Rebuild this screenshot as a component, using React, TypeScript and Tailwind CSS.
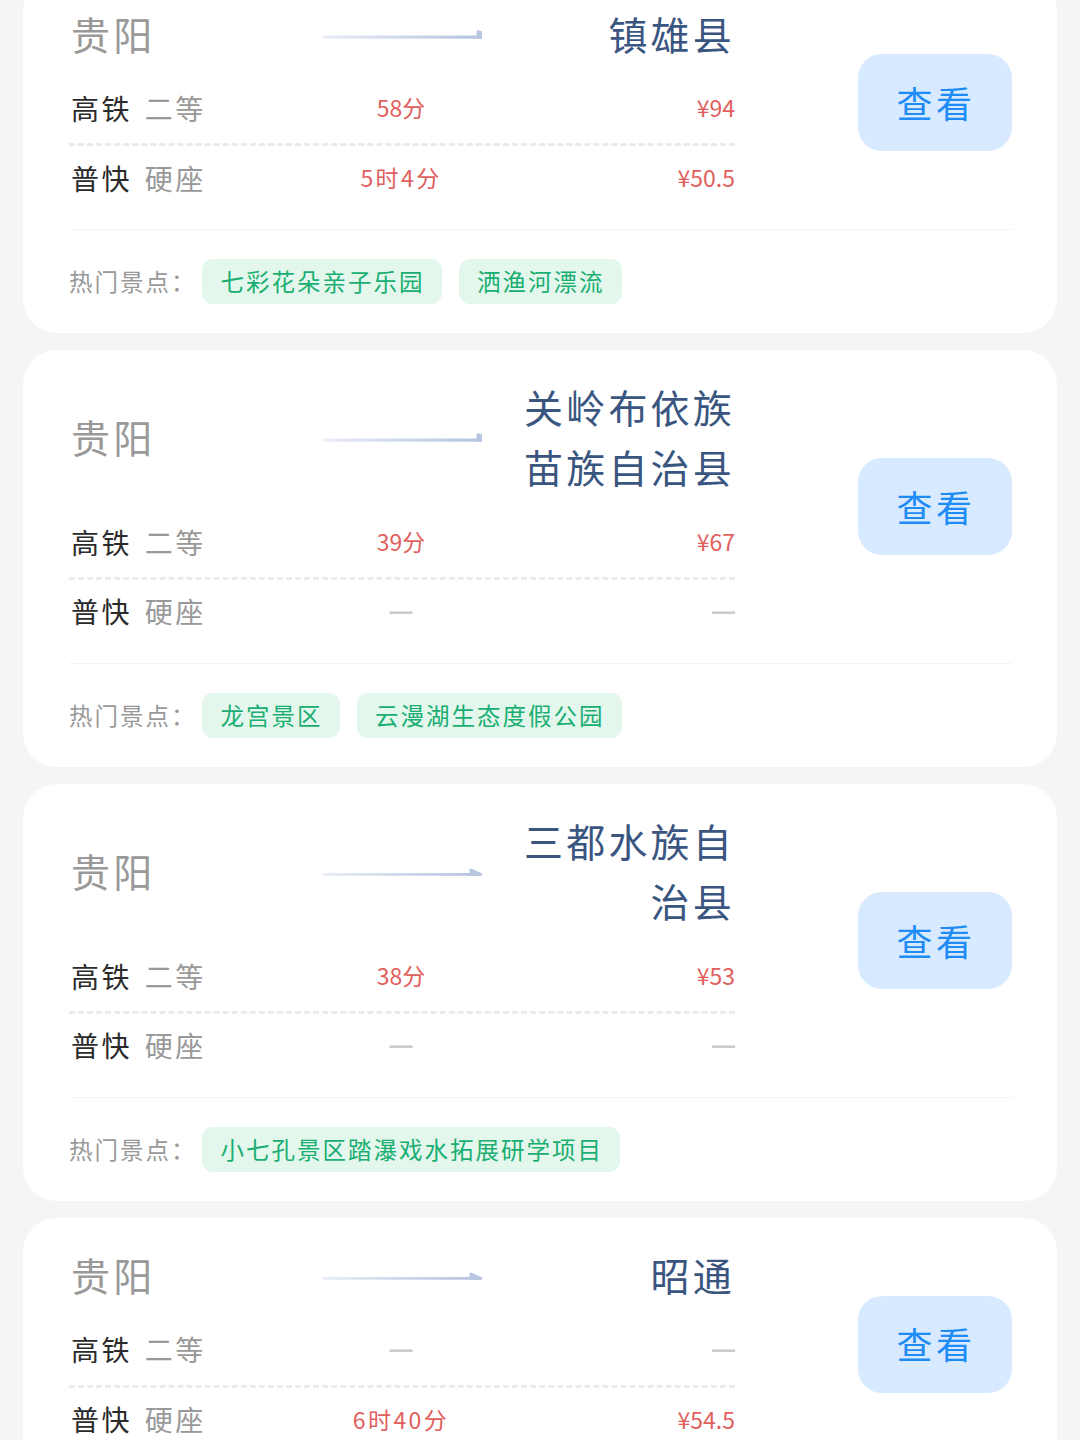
import { clsx } from 'clsx';

type Fare = {
  train: string;
  seat: string;
  duration?: string;
  price?: string;
};

type Route = {
  from: string;
  to: string;
  arrow: 'block' | 'barb';
  fares: Fare[];
  spots: string[];
};

const routes: Route[] = [
  {
    from: '贵阳',
    to: '镇雄县',
    arrow: 'block',
    fares: [
      { train: '高铁', seat: '二等', duration: '58分', price: '¥94' },
      { train: '普快', seat: '硬座', duration: '5时4分', price: '¥50.5' },
    ],
    spots: ['七彩花朵亲子乐园', '洒渔河漂流'],
  },
  {
    from: '贵阳',
    to: '关岭布依族苗族自治县',
    arrow: 'block',
    fares: [
      { train: '高铁', seat: '二等', duration: '39分', price: '¥67' },
      { train: '普快', seat: '硬座' },
    ],
    spots: ['龙宫景区', '云漫湖生态度假公园'],
  },
  {
    from: '贵阳',
    to: '三都水族自治县',
    arrow: 'barb',
    fares: [
      { train: '高铁', seat: '二等', duration: '38分', price: '¥53' },
      { train: '普快', seat: '硬座' },
    ],
    spots: ['小七孔景区踏瀑戏水拓展研学项目'],
  },
  {
    from: '贵阳',
    to: '昭通',
    arrow: 'barb',
    fares: [
      { train: '高铁', seat: '二等' },
      { train: '普快', seat: '硬座', duration: '6时40分', price: '¥54.5' },
    ],
    spots: [],
  },
];

function RouteArrow({ kind, id }: { kind: Route['arrow']; id: string }) {
  return (
    <svg width="160" height="20" viewBox="0 0 160 20" className="mt-1 justify-self-center">
      <defs>
        <linearGradient id={id} x1="0" x2="1" y1="0" y2="0">
          <stop offset="0" stopColor="#e8edf6" />
          <stop offset="1" stopColor="#b5c3df" />
        </linearGradient>
      </defs>
      {kind === 'block' ? (
        <>
          <rect x="1" y="10.5" width="159" height="3.2" fill={`url(#${id})`} />
          <path d="M154.5 10.5V6.5L156 5l4 1.5v7.2h-5.5z" fill="#b8c6e1" />
        </>
      ) : (
        <>
          <rect x="1" y="11" width="157" height="2.8" fill={`url(#${id})`} />
          <path d="M147.5 13.8V7.2l1.5-.7L160 11.6v2.2z" fill="#b8c6e1" />
        </>
      )}
    </svg>
  );
}

function Value({ text, className }: { text?: string; className?: string }) {
  if (!text) {
    return (
      <span className={clsx("font-['Liberation_Sans',sans-serif] text-[23px] font-bold text-[#cccccc]", className)}>
        —
      </span>
    );
  }
  return (
    <span className={clsx('text-[23px] text-[#e0605e]', text.includes('时') && 'tracking-[2.4px]', className)}>
      {text}
    </span>
  );
}

function FareRow({ fare, first }: { fare: Fare; first: boolean }) {
  return (
    <div
      className={clsx(
        'grid grid-cols-3 items-center leading-none',
        first ? 'h-[73.5px] border-b-[3px] border-dashed border-[#e9ebf1]' : 'h-[65px] pb-0.5'
      )}
    >
      <div className="flex gap-[13px] pl-0.5 text-[28px] tracking-[2.4px]">
        <span className="text-[#2b2b2b]">{fare.train}</span>
        <span className="text-[#999999]">{fare.seat}</span>
      </div>
      <Value text={fare.duration} className="pr-0.5 text-center" />
      <Value text={fare.price} className="text-right" />
    </div>
  );
}

function RouteCard({ route, id }: { route: Route; id: string }) {
  return (
    <section className="min-h-[356px] rounded-[34px] bg-white pr-[45px] pl-[46px] pt-7 pb-[29px]">
      <div className="flex items-center justify-between pb-[18px]">
        <div className="w-[666px]">
          <div className="mb-2.5 -mt-0.5 grid grid-cols-3 items-center text-[39px] leading-[60px] tracking-[3.2px]">
            <span className="pl-0.5 text-[#999999]">{route.from}</span>
            <RouteArrow kind={route.arrow} id={id} />
            <span className="text-right text-[#3a5680]">{route.to}</span>
          </div>
          {route.fares.map((fare, i) => (
            <FareRow key={fare.train} fare={fare} first={i === 0} />
          ))}
        </div>
        <button className="mb-2.5 h-[97px] w-[154px] rounded-3xl bg-[#d8eaff] pb-0.5 pl-0.5 text-[36px] leading-none tracking-[3.5px] text-[#1f8cf5]">
          查看
        </button>
      </div>
      {route.spots.length > 0 && (
        <div className="flex items-center border-t border-[#f3f4f5] pt-[29px] leading-none">
          <span className="w-[133px] shrink-0 text-[23.5px] tracking-[2px] whitespace-nowrap text-[#999999]">热门景点：</span>
          <div className="flex gap-[17px]">
            {route.spots.map((spot) => (
              <span
                key={spot}
                className="flex h-[45px] items-center rounded-[11px] bg-[#e3f7ed] pr-[17px] pl-[18.5px] text-[23.5px] tracking-[2px] whitespace-nowrap text-[#1aae72]"
              >
                {spot}
              </span>
            ))}
          </div>
        </div>
      )}
    </section>
  );
}

export default function App() {
  return (
    <div className="h-screen overflow-hidden bg-[#f5f5f5] px-[23px] font-['Noto_Sans_CJK_SC',sans-serif]">
      <div className="-mt-[23.5px] flex flex-col gap-[17.4px]">
        {routes.map((route, i) => (
          <RouteCard key={route.to} route={route} id={`arrow-${i}`} />
        ))}
      </div>
    </div>
  );
}
